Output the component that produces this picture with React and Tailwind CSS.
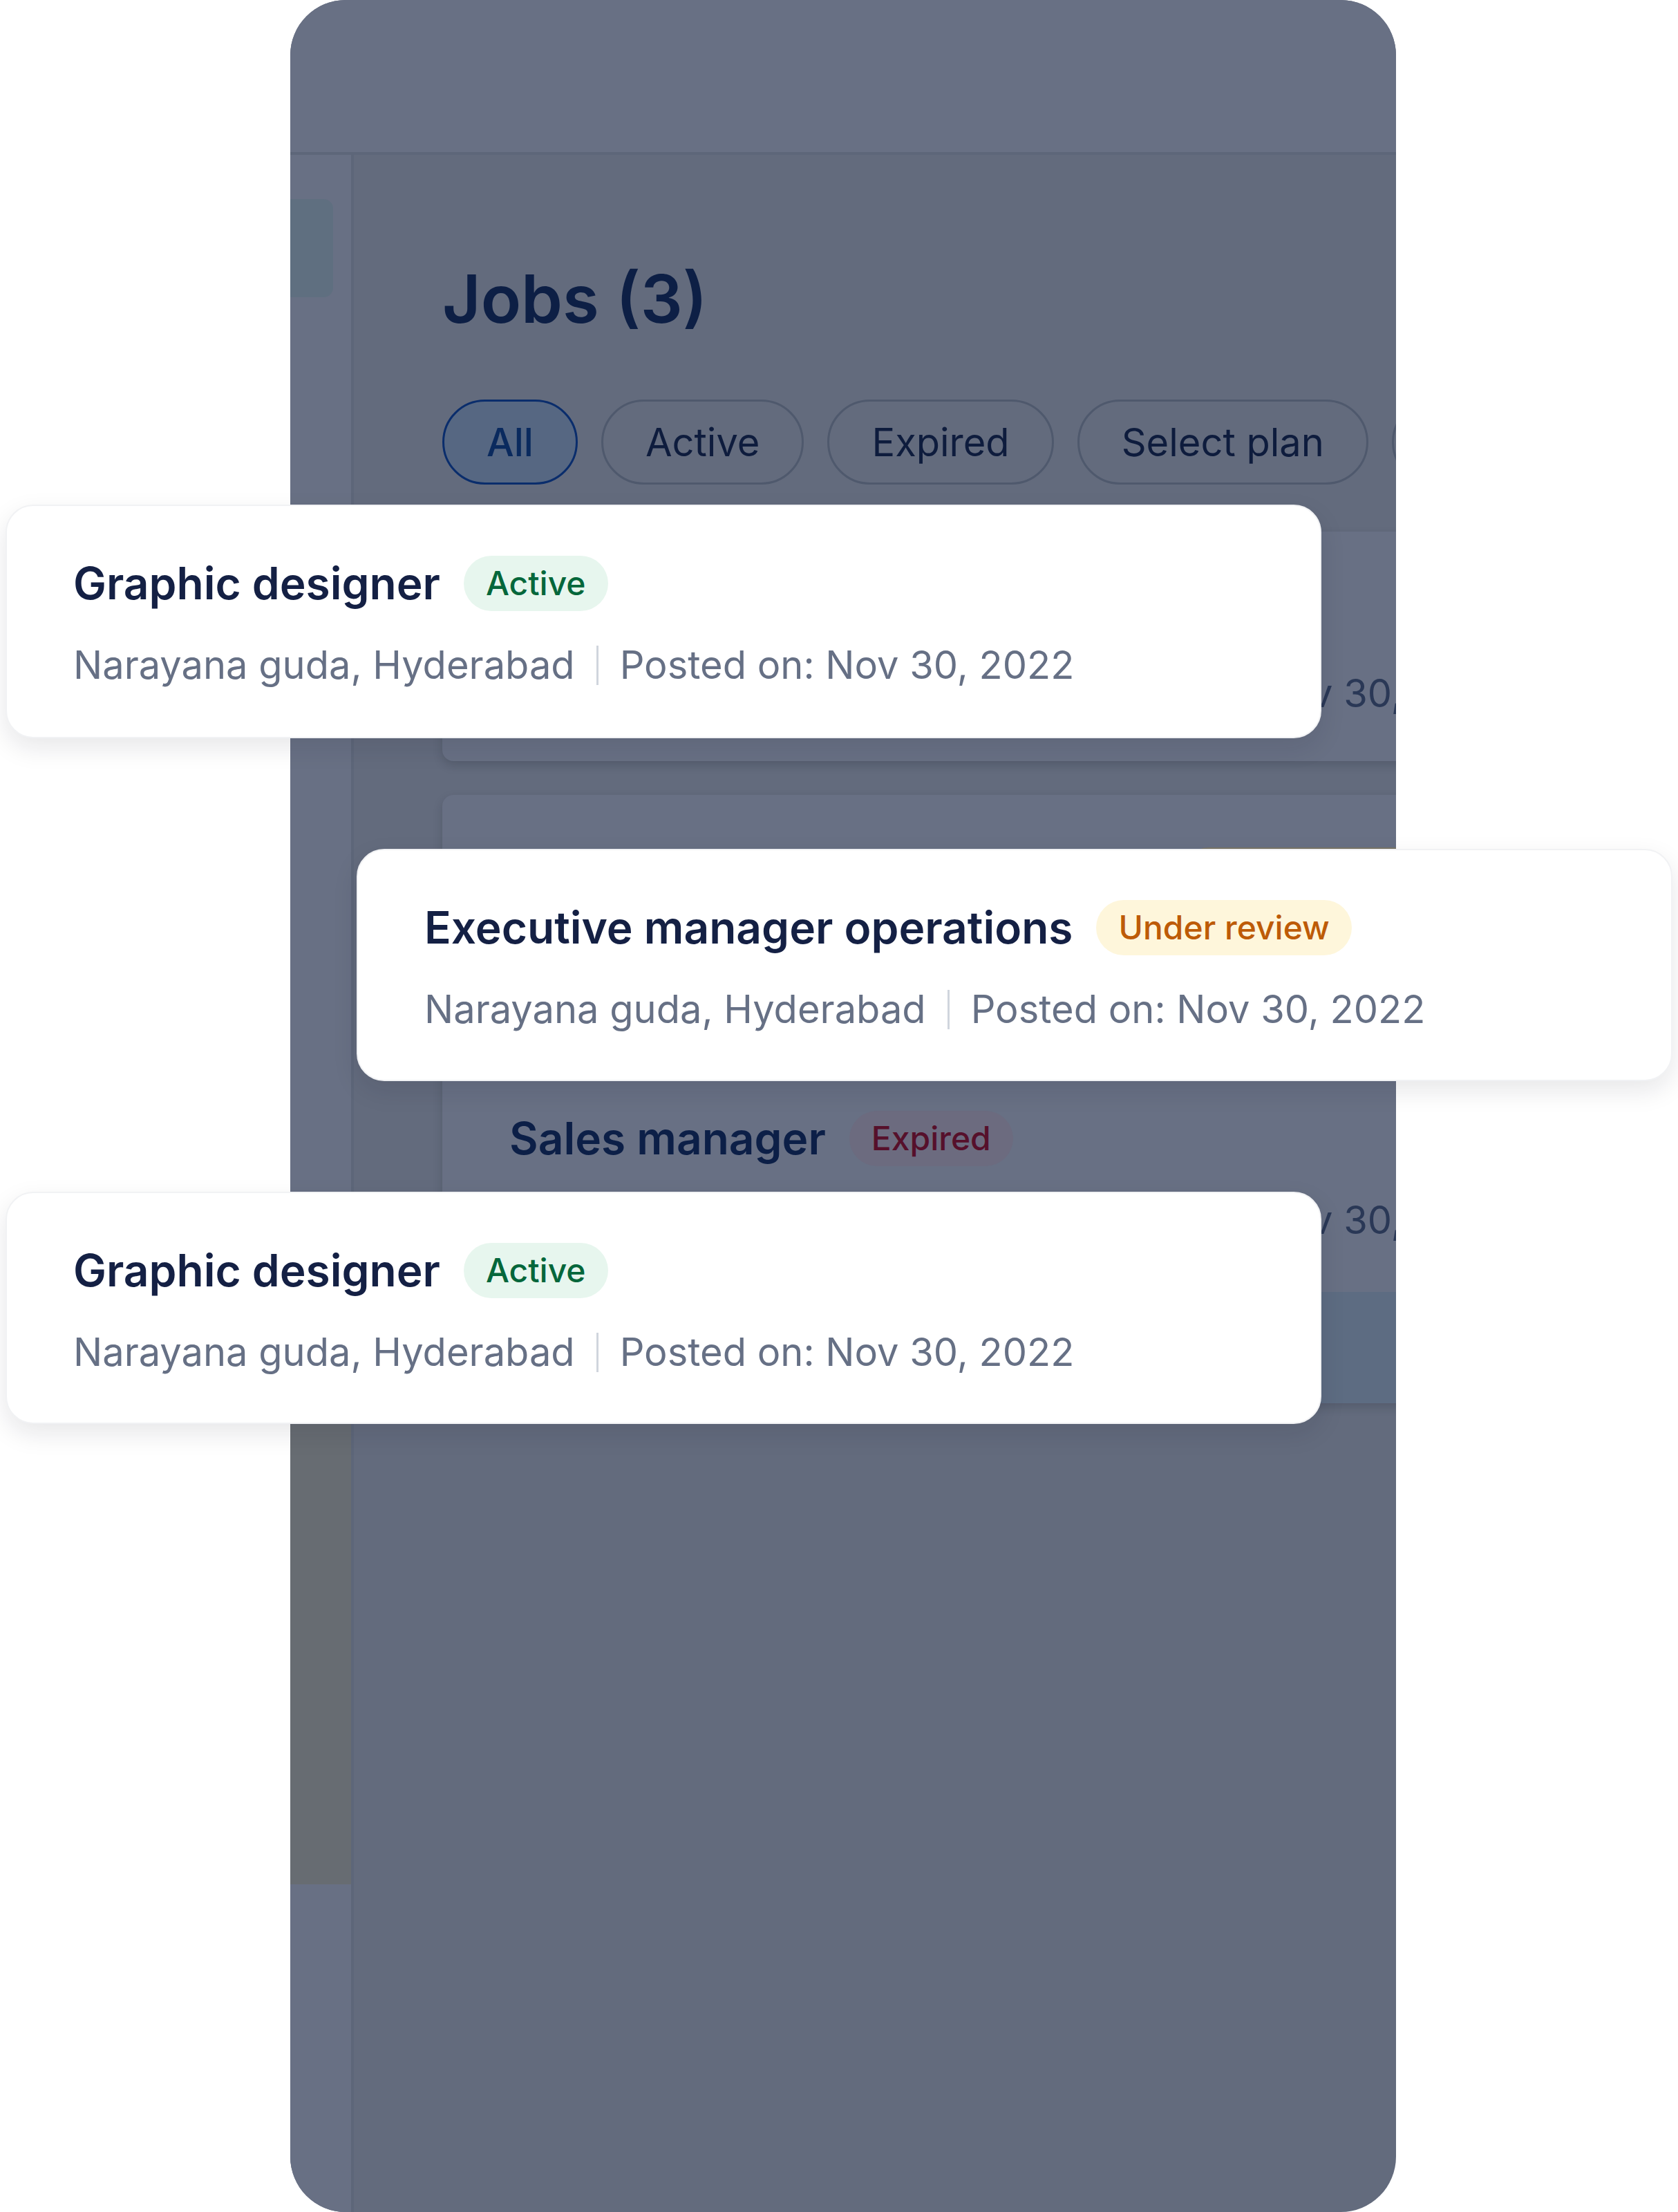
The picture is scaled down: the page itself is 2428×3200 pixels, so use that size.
import React from 'react';

const filters = [
  { label: 'All', active: true },
  { label: 'Active' },
  { label: 'Expired' },
  { label: 'Select plan' },
  { label: 'Drafts' },
];

const bgJobs = [
  { title: 'Graphic designer', status: 'Active', badge: 'bg-[#5f7a78] text-[#04361f]' },
  { title: 'Executive manager operations', status: 'Under review', badge: 'bg-[#7a7668] text-[#5c2a0a]' },
  { title: 'Sales manager', status: 'Expired', badge: 'bg-[#6c6b7f] text-[#56102b]', footer: true },
];

// the cards that pop out in front of the dimmed screen
const popJobs = [
  { title: 'Graphic designer', status: 'Active', badge: 'bg-[#e7f6ee] text-[#05673b]', pos: 'left-[8px] top-[730px] h-[338px]' },
  { title: 'Executive manager operations', status: 'Under review', badge: 'bg-[#fef6db] text-[#bd5b07]', pos: 'left-[516px] top-[1228px] h-[336px]' },
  { title: 'Graphic designer', status: 'Active', badge: 'bg-[#e7f6ee] text-[#05673b]', pos: 'left-[8px] top-[1724px] h-[336px]' },
];

function Pill({ label, active }) {
  return (
    <div
      className={
        active
          ? 'shrink-0 h-[123px] px-[61px] flex items-center rounded-full border-[3px] border-[#0a2d6c] bg-[#566782] text-[#0a2a5e] text-[56px] font-medium'
          : 'shrink-0 h-[123px] px-[61px] flex items-center rounded-full border-[3px] border-[#4f596d] text-[#0e1c3d] text-[56px]'
      }
    >
      {label}
    </div>
  );
}

function BgCard({ job }) {
  return (
    <div className="w-[1500px] shrink-0 rounded-[16px] overflow-hidden bg-[#687084] shadow-[0_6px_14px_rgba(20,26,40,0.18)]">
      <div className={job.footer ? 'h-[338px] pl-[97px] pt-[76px]' : 'h-[332px] pl-[97px] pt-[76px]'}>
        <div className="flex items-center h-[80px]">
          <span className="text-[64px] font-semibold text-[#0c1f47] whitespace-nowrap">{job.title}</span>
          <span className={'ml-[34px] h-[80px] px-[32px] flex items-center rounded-full text-[48px] font-medium ' + job.badge}>
            {job.status}
          </span>
        </div>
        <div className="mt-[36px] flex items-center h-[84px] text-[56px] text-[#2a3856] whitespace-nowrap">
          <span>Narayana guda, Hyderabad</span>
          <span className="mx-[31px] w-[3px] h-[57px] bg-[#5a6478]" />
          <span>Posted on: Nov 30, 2022</span>
        </div>
      </div>
      {job.footer && <div className="h-[161px] bg-[#5d6c82]" />}
    </div>
  );
}

function PopCard({ job }) {
  return (
    <div className={'absolute w-[1904px] rounded-[40px] bg-white border-[2px] border-[#f1f2f4] shadow-[0_14px_36px_rgba(16,24,40,0.10)] pl-[96px] pt-[72px] ' + job.pos}>
      <div className="flex items-center h-[80px]">
        <span className="text-[64px] font-semibold text-[#142044] whitespace-nowrap">{job.title}</span>
        <span className={'ml-[34px] h-[80px] px-[32px] flex items-center rounded-full text-[48px] font-medium ' + job.badge}>
          {job.status}
        </span>
      </div>
      <div className="mt-[36px] flex items-center h-[84px] text-[56px] text-[#667085] whitespace-nowrap">
        <span>Narayana guda, Hyderabad</span>
        <span className="mx-[31px] w-[3px] h-[57px] bg-[#d0d5dd]" />
        <span>Posted on: Nov 30, 2022</span>
      </div>
    </div>
  );
}

export default function App() {
  return (
    <div className="relative w-[2428px] h-[3200px] bg-white overflow-hidden font-['Inter',sans-serif]">
      {/* dimmed phone screen */}
      <div className="ml-[420px] w-[1600px] h-[3200px] rounded-[80px] overflow-hidden bg-[#636b7d] flex flex-col">
        <div className="h-[224px] shrink-0 bg-[#687084] border-b-[4px] border-[#5d6679]" />

        <div className="flex flex-1 min-h-0">
          {/* SIDEBAR */}
          <div className="w-[92px] shrink-0 bg-[#687084] border-r-[4px] border-[#5d6679] pt-[64px]">
            <div className="w-[62px] h-[142px] rounded-r-[14px] bg-[#5f6f80]" />
            <div className="mt-[1370px] h-[926px] bg-[#676c72]" />
          </div>

          {/* MAIN */}
          <div className="flex-1 min-w-0 overflow-hidden pl-[128px] pt-[160px]">
            <h1 className="text-[96px] leading-none font-semibold text-[#0d1f45]">Jobs (3)</h1>

            <div className="mt-[98px] flex gap-[34px]">
              {filters.map((f) => (
                <Pill key={f.label} label={f.label} active={f.active} />
              ))}
            </div>

            <div className="mt-[68px] flex flex-col gap-[49px]">
              {bgJobs.map((job, i) => (
                <BgCard key={i} job={job} />
              ))}
            </div>
          </div>
        </div>
      </div>

      {popJobs.map((job, i) => (
        <PopCard key={i} job={job} />
      ))}
    </div>
  );
}
